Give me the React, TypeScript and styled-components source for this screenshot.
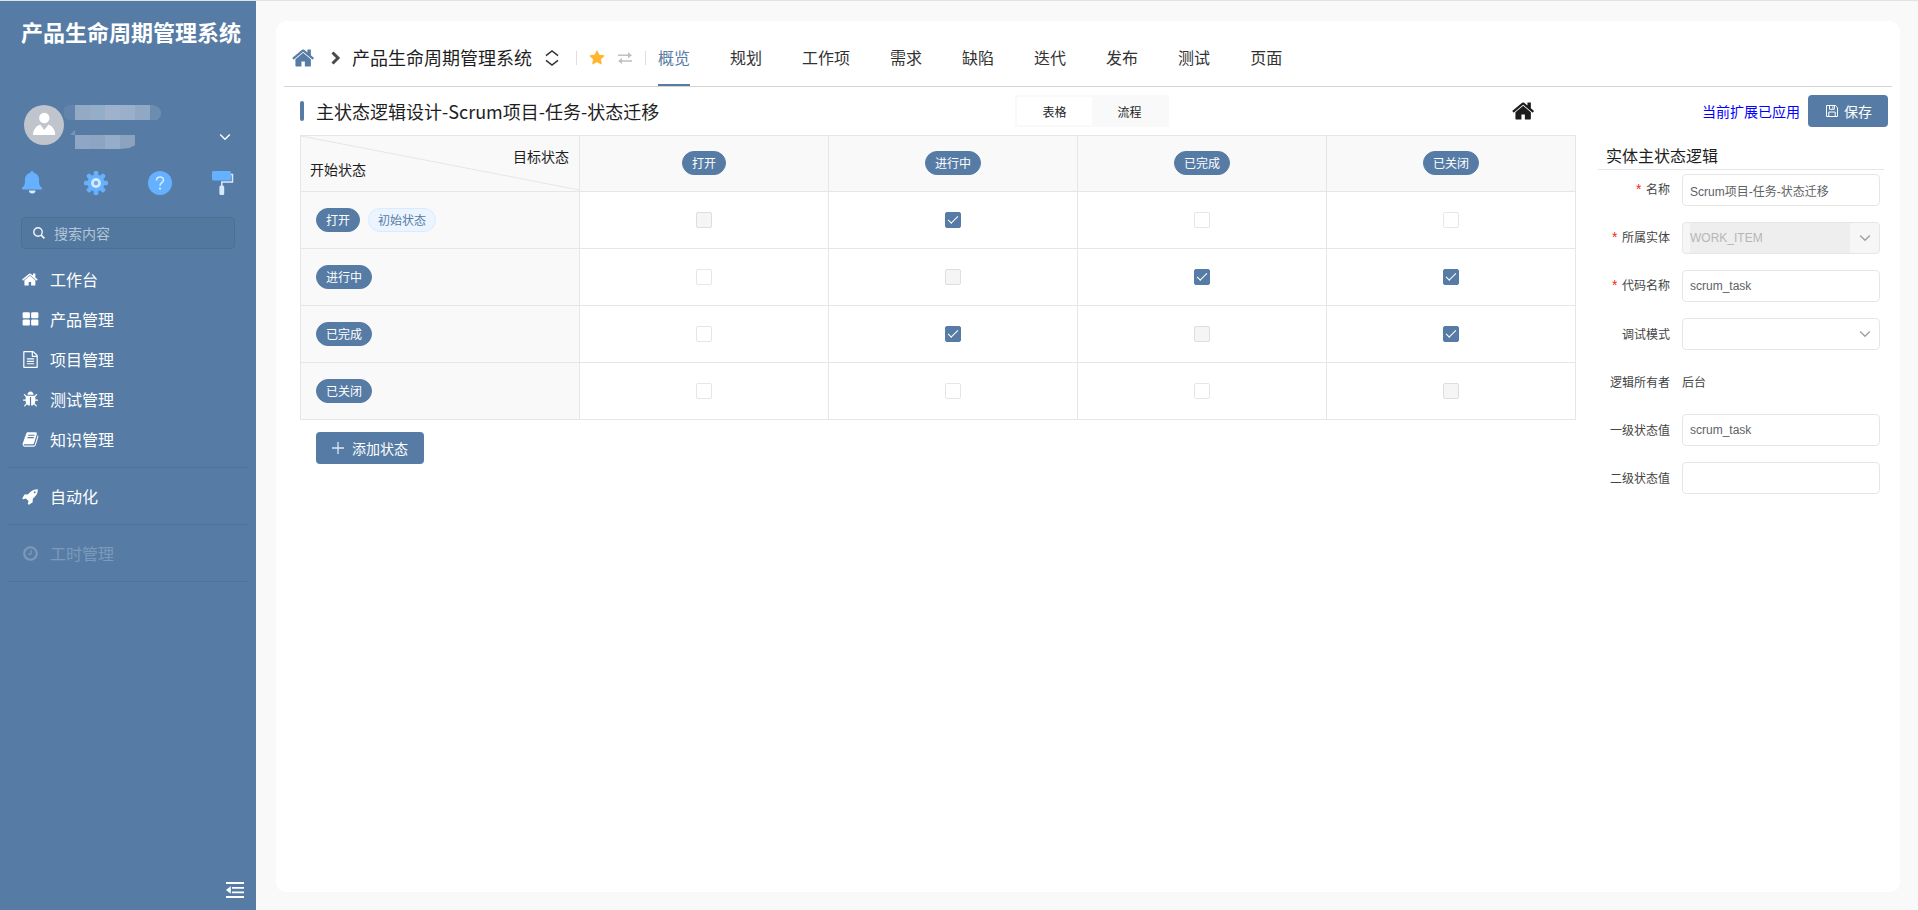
import React, { useState } from "react";
import styled, { createGlobalStyle, css } from "styled-components";

const brand = "#567ca5";
const line = "#e6e6e6";
const soft = "#f9f9f9";

const GlobalStyle = createGlobalStyle`
  *, *::before, *::after { box-sizing: border-box; }
  body {
    margin: 0;
    background: ${soft};
    color: #1e1e1e;
    font: 14px/20px "Noto Sans CJK SC", sans-serif;
  }
  button, input, select { font-family: inherit; margin: 0; }
  svg { display: block; flex: none; }
`;

/* ---------- icons ---------- */

const glyphs = {
  home: "M1408 992v480q0 26-19 45t-45 19h-384v-384h-256v384h-384q-26 0-45-19t-19-45v-480q0-1 .5-3t.5-3l575-474 575 474q1 2 1 6zm223-69l-62 74q-8 9-21 11h-3q-13 0-21-7l-692-577-692 577q-12 8-24 7-13-2-21-11l-62-74q-8-10-7-23.5t11-21.5l719-599q32-26 76-26t76 26l244 204v-195q0-14 9-23t23-9h192q14 0 23 9t9 23v408l219 182q10 8 11 21.5t-7 23.5z",
  grid: "M832 1024v384q0 52-38 90t-90 38h-512q-52 0-90-38t-38-90v-384q0-52 38-90t90-38h512q52 0 90 38t38 90zm0-768v384q0 52-38 90t-90 38h-512q-52 0-90-38t-38-90v-384q0-52 38-90t90-38h512q52 0 90 38t38 90zm896 768v384q0 52-38 90t-90 38h-512q-52 0-90-38t-38-90v-384q0-52 38-90t90-38h512q52 0 90 38t38 90zm0-768v384q0 52-38 90t-90 38h-512q-52 0-90-38t-38-90v-384q0-52 38-90t90-38h512q52 0 90 38t38 90z",
  file: "M1596 380q28 28 48 76t20 88v1152q0 40-28 68t-68 28h-1344q-40 0-68-28t-28-68v-1600q0-40 28-68t68-28h896q40 0 88 20t76 48zm-444-244v376h376q-10-29-22-41l-313-313q-12-12-41-22zm384 1528v-1024h-416q-40 0-68-28t-28-68v-416h-768v1536h1280zm-1024-864q0-14 9-23t23-9h704q14 0 23 9t9 23v64q0 14-9 23t-23 9h-704q-14 0-23-9t-9-23v-64zm736 224q14 0 23 9t9 23v64q0 14-9 23t-23 9h-704q-14 0-23-9t-9-23v-64q0-14 9-23t23-9h704zm0 256q14 0 23 9t9 23v64q0 14-9 23t-23 9h-704q-14 0-23-9t-9-23v-64q0-14 9-23t23-9h704z",
  bug: "M1696 960q0 26-19 45t-45 19h-224q0 171-67 290l208 209q19 19 19 45t-19 45q-18 19-45 19t-45-19l-198-197q-5 5-15 13t-42 28.5-65 36.5-82 29-97 13v-896h-128v896q-51 0-101.5-13.5t-87-33-66-39-43.5-32.5l-15-14-183 207q-20 21-48 21-24 0-43-16-19-18-20.5-44.5t15.5-46.5l202-227q-58-114-58-274h-224q-26 0-45-19t-19-45 19-45 45-19h224v-294l-173-173q-19-19-19-45t19-45 45-19 45 19l173 173h844l173-173q19-19 45-19t45 19 19 45-19 45l-173 173v294h224q26 0 45 19t19 45zm-480-576h-640q0-133 93.5-226.5t226.5-93.5 226.5 93.5 93.5 226.5z",
  book: "M1703 478q40 57 18 129l-275 906q-19 64-76.5 107.5t-122.5 43.5h-923q-77 0-148.5-53.5t-99.5-131.5q-24-67-2-127 0-4 3-27t4-37q1-8-3-21.5t-3-19.5q2-11 8-21t16.5-23.5 16.5-23.5q23-38 45-91.5t30-91.5q3-10 .5-30t-.5-28q3-11 17-28t17-23q21-36 42-92t25-90q1-9-2.5-32t.5-28q4-13 22-30.5t22-22.5q19-26 42.5-84.5t27.5-96.5q1-8-3-25.5t-2-26.5q2-8 9-18t18-23 17-21q8-12 16.5-30.5t15-35 16-36 19.5-32 26.5-23.5 36-11.5 47.5 5.5l-1 3q38-9 51-9h761q74 0 114 56t18 130l-274 906q-36 119-71.5 153.5t-128.5 34.5h-869q-27 0-38 15-11 16-1 43 24 70 144 70h923q29 0 56-15.5t35-41.5l300-987q7-22 5-57 38 15 59 43zm-1064 2q-4 13 2 22.5t20 9.5h608q13 0 25.5-9.5t16.5-22.5l21-64q4-13-2-22.5t-20-9.5h-608q-13 0-25.5 9.5t-16.5 22.5zm-83 256q-4 13 2 22.5t20 9.5h608q13 0 25.5-9.5t16.5-22.5l21-64q4-13-2-22.5t-20-9.5h-608q-13 0-25.5 9.5t-16.5 22.5z",
  rocket: "M1440 448q0-40-28-68t-68-28-68 28-28 68 28 68 68 28 68-28 28-68zm224-288q0 249-75.5 430.5t-253.5 360.5q-81 80-195 176l-20 379q-2 16-16 26l-384 224q-7 4-16 4-12 0-23-9l-64-64q-13-14-8-32l85-276-281-281-276 85q-3 1-9 1-14 0-23-9l-64-64q-17-19-5-39l224-384q10-14 26-16l379-20q96-114 176-195 188-187 358-258t431-71q14 0 24 9.5t10 22.5z",
  clock: "M1024 544v448q0 14-9 23t-23 9h-320q-14 0-23-9t-9-23v-64q0-14 9-23t23-9h224v-352q0-14 9-23t23-9h64q14 0 23 9t9 23zm416 352q0-148-73-273t-198-198-273-73-273 73-198 198-73 273 73 273 198 198 273 73 273-73 198-198 73-273zm224 0q0 209-103 385.5t-279.5 279.5-385.5 103-385.5-103-279.5-279.5-103-385.5 103-385.5 279.5-279.5 385.5-103 385.5 103 279.5 279.5 103 385.5z",
  star: "M1728 647q0 22-26 48l-363 354 86 500q1 7 1 20 0 21-10.5 35.5t-30.5 14.5q-19 0-40-12l-449-236-449 236q-22 12-40 12-21 0-31.5-14.5t-10.5-35.5q0-6 2-20l86-500-364-354q-25-27-25-48 0-37 56-46l502-73 225-455q19-41 49-41t49 41l225 455 502 73q56 9 56 46z",
};

type GlyphName = keyof typeof glyphs;

const Glyph = ({ name, size = 17 }: { name: GlyphName; size?: number }) => (
  <svg width={size} height={size} viewBox="0 0 1792 1792" fill="currentColor" aria-hidden="true">
    <path d={glyphs[name]} />
  </svg>
);

const Chevron = () => (
  <svg width="12" height="8" viewBox="0 0 12 8" fill="none" stroke="currentColor" aria-hidden="true">
    <path d="M1.200 1.500 6 6.200l4.800-4.700" strokeWidth="1.400" />
  </svg>
);

const Bell = () => (
  <svg width="24" height="24" viewBox="0 0 24 24" aria-hidden="true">
    <path d="M9 19.500h6.500a3.200 3 0 0 1-6.500 0z" fill="#d6eaff" />
    <path d="M12 0a1.600 1.600 0 0 1 1.600 1.700c3.400.8 5.400 3.500 5.400 7 0 4.500.6 6.300 2.700 7.900.8.600.5 1.900-.6 1.900H2.900c-1.100 0-1.400-1.300-.6-1.900C4.400 15 5 13.200 5 8.700c0-3.500 2-6.200 5.400-7A1.600 1.600 0 0 1 12 0z" fill="#66b1ff" />
  </svg>
);

const Gear = () => (
  <svg width="24" height="24" viewBox="0 0 24 24" aria-hidden="true">
    <g fill="#66b1ff">
      <circle cx="12" cy="12" r="8.600" />
      {[0, 45, 90, 135].map((a) => (
        <rect key={a} x="9.700" y="0" width="4.600" height="24" rx="1.500" transform={`rotate(${a} 12 12)`} />
      ))}
    </g>
    <circle cx="12" cy="12" r="5" fill="#d6eaff" />
    <circle cx="12" cy="12" r="2.200" fill="#66b1ff" />
  </svg>
);

const Help = () => (
  <svg width="24" height="24" viewBox="0 0 24 24" fill="none" aria-hidden="true">
    <circle cx="12" cy="12" r="12" fill="#66b1ff" />
    <path d="M8.500 9.400c0-4.600 7-4.500 7-.3 0 2.400-3.500 2.700-3.500 5.600" stroke="#d6eaff" strokeWidth="1.600" />
    <circle cx="12" cy="17.700" r="1.100" fill="#d6eaff" />
  </svg>
);

const Roller = () => (
  <svg width="24" height="24" viewBox="0 0 24 24" fill="none" aria-hidden="true">
    <path d="M18 3.500h2.500v7.500H9.800v4.500" stroke="#d6eaff" strokeWidth="1.500" />
    <rect x="7.400" y="14.500" width="4.800" height="9.500" rx="1.500" fill="#d6eaff" />
    <rect x="0" y="0" width="19" height="9.500" rx="1.500" fill="#66b1ff" />
  </svg>
);

const Avatar = () => (
  <svg width="40" height="40" viewBox="0 0 40 40" aria-hidden="true">
    <circle cx="20" cy="20" r="20" fill="#c0c4cc" />
    <circle cx="20.300" cy="13" r="5.200" fill="#fff" />
    <path d="M9 30c0-5 3-9 7.200-10.500L20.300 25l4.200-5.500C28.500 21 31.200 25 31.200 30z" fill="#fff" />
  </svg>
);

const MaskedName = () => (
  <svg width="98" height="44" viewBox="0 0 98 44" role="img" aria-label="用户信息">
    <path d="M11 0H6a7 7 0 0 0 0 15h5z" fill="#6284ab" />
    <path d="M86 0a10 8 0 0 1 11 8 9 8 0 0 1-4 7h-7z" fill="#6c8db2" />
    {["#93a9c4", "#94aec9", "#9fb2cc", "#9aafc9", "#90a8c4"].map((c, i) => (
      <rect key={c} x={11 + i * 15} y="0" width="15" height="15" fill={c} />
    ))}
    <path d="M6 30l5-5v5z" fill="#7795b8" />
    {["#8fa7c4", "#8da5c2", "#94adc8"].map((c, i) => (
      <rect key={c} x={11 + i * 15} y="30" width="15" height="14" fill={c} />
    ))}
    <path d="M56 30h15v10c-2 2-4 1-5 3l-10 1z" fill="#8ba3bf" />
  </svg>
);

const SearchIcon = () => (
  <svg width="12" height="12" viewBox="0 0 12 12" fill="none" stroke="#f2f5f8" aria-hidden="true">
    <circle cx="5" cy="5" r="4.200" strokeWidth="1.400" />
    <path d="M8.200 8.200l3.200 3.200" strokeWidth="1.700" />
  </svg>
);

const CollapseIcon = () => (
  <svg width="18" height="16" viewBox="0 0 18 16" fill="#fff" aria-hidden="true">
    <path d="M0 0h18v2H0zM6 5h12v1.700H6zM6 9.500h12v1.700H6zM0 14h18v2H0zM0 8l4.800-3.800v7.600z" />
  </svg>
);

const RightMark = () => (
  <svg width="10" height="14" viewBox="0 0 10 14" fill="none" stroke="#4a4a4a" strokeWidth="3" aria-hidden="true">
    <path d="M1.500 1.500L7 7l-5.500 5.500" />
  </svg>
);

const SwitchMark = () => (
  <svg width="14" height="16" viewBox="0 0 14 16" fill="none" stroke="#333" strokeWidth="1.500" aria-hidden="true">
    <path d="M1 5.700L7 1l6 4.700M1 10.300L7 15l6-4.700" />
  </svg>
);

const SwapIcon = () => (
  <svg width="14" height="12" viewBox="0 0 14 12" fill="#c0c0c0" aria-hidden="true">
    <path d="M0 2.500h10V.3L14 3.300l-4 3V4H0zM14 9.700H4v2.200L0 8.900l4-2.900v2.200h10z" />
  </svg>
);

const SaveIcon = () => (
  <svg width="12" height="12" viewBox="0 0 12 12" fill="none" stroke="#fff" aria-hidden="true">
    <path d="M.5.5h8.800l2.200 2.200v8.800H.5zM3.500.5v3.800h4.800V.5M2.800 11.500V7h6.400v4.500M6.800 1.500v2" />
  </svg>
);

const PlusIcon = () => (
  <svg width="12" height="12" viewBox="0 0 12 12" stroke="#dfe7ef" aria-hidden="true">
    <path d="M6 0v12M0 6h12" strokeWidth="1.300" />
  </svg>
);

/* ---------- shell ---------- */

const Shell = styled.div`
  display: flex;
  min-height: 100vh;
  border-top: 1px solid #e2e2e2;
`;

const Sidebar = styled.aside`
  flex: none;
  display: flex;
  flex-direction: column;
  width: 256px;
  background: ${brand};
  color: #fff;
`;

const Brand = styled.h1`
  margin: 0;
  padding: 14px 0 0 21px;
  font-size: 22px;
  line-height: 32px;
  font-weight: 700;
  white-space: nowrap;
`;

const UserRow = styled.div`
  display: flex;
  margin-top: 58px;
  padding: 0 25px 0 24px;
`;

const UserToggle = styled.button`
  margin: 26px 0 0 auto;
  padding: 0;
  height: 12px;
  border: 0;
  background: none;
  color: #fff;
`;

const Shortcuts = styled.div`
  display: flex;
  justify-content: space-between;
  padding: 0 20px;
  margin-top: 22px;
`;

const IconButton = styled.button`
  padding: 0;
  border: 0;
  background: none;
  color: inherit;
  cursor: pointer;
`;

const SearchBox = styled.label`
  display: flex;
  align-items: center;
  gap: 9px;
  height: 32px;
  margin: 22px 21px 10px;
  padding: 0 11px;
  border: 1px solid #4b7096;
  border-radius: 4px;
  background: #52789f;
`;

const SearchInput = styled.input`
  width: 100%;
  padding: 0;
  border: 0;
  outline: 0;
  background: none;
  color: #fff;
  font-size: 14px;
  line-height: 20px;
  &::placeholder { color: #b4c5d7; }
`;

const Menu = styled.nav`
  padding: 0 8px;
`;

const MenuGroup = styled.div`
  padding-bottom: 8px;
  margin-bottom: 8px;
  border-bottom: 1px solid #4e739b;
`;

const MenuLink = styled.a<{ $muted?: boolean }>`
  display: flex;
  align-items: center;
  gap: 11px;
  height: 40px;
  padding: 0 14px;
  font-size: 16px;
  color: ${(p) => (p.$muted ? "#7d9aba" : "#fff")};
  text-decoration: none;
`;

const SidebarFoot = styled.div`
  display: flex;
  justify-content: flex-end;
  margin-top: auto;
  padding: 12px;
`;

const Main = styled.main`
  flex: 1;
  min-width: 0;
  display: flex;
  padding: 20px 18px 18px 20px;
`;

const Card = styled.section`
  flex: 1;
  min-width: 0;
  padding: 0 8px;
  border-radius: 10px;
  background: #fff;
`;

/* ---------- header ---------- */

const Header = styled.header`
  display: flex;
  align-items: center;
  height: 66px;
  padding: 8px 8px 0;
  border-bottom: 1px solid #d3d3d3;
`;

const HomeLink = styled.a`
  margin-right: 15px;
  color: ${brand};
`;

const ProjectName = styled.span`
  margin: 0 13px 0 11px;
  padding-bottom: 2px;
  font-size: 18px;
  line-height: 28px;
  white-space: nowrap;
`;

const Separator = styled.span`
  width: 1px;
  height: 14px;
  margin: 0 12px 0 13px;
  background: #dedede;
`;

const SeparatorWide = styled(Separator)`
  margin-left: 17px;
`;

const StarButton = styled(IconButton)`
  margin-right: 13px;
  color: #ffb62e;
`;

const Tabs = styled.nav`
  display: flex;
  align-self: stretch;
  gap: 40px;
`;

const Tab = styled.a<{ $active?: boolean }>`
  display: flex;
  align-items: center;
  border-bottom: 2px solid ${(p) => (p.$active ? brand : "transparent")};
  color: ${(p) => (p.$active ? brand : "#333")};
  font-size: 16px;
  text-decoration: none;
  white-space: nowrap;
`;

/* ---------- toolbar ---------- */

const Toolbar = styled.div`
  display: grid;
  grid-template-columns: 1fr auto 1fr;
  align-items: center;
  padding: 8px 4px 8px 12px;
`;

const PageTitle = styled.h2`
  display: flex;
  align-items: center;
  gap: 12px;
  margin: 0 0 0 4px;
  font-size: 18px;
  line-height: 28px;
  font-weight: 400;
  white-space: nowrap;
  &::before {
    content: "";
    width: 4px;
    height: 20px;
    border-radius: 2px;
    background: ${brand};
  }
`;

const Segmented = styled.div`
  display: flex;
  padding: 2px;
  border-radius: 2px;
  background: ${soft};
`;

const Segment = styled.button<{ $active?: boolean }>`
  width: 75px;
  height: 28px;
  padding: 0;
  border: 0;
  border-radius: 2px;
  background: ${(p) => (p.$active ? "#fff" : "transparent")};
  color: #1e1e1e;
  font-size: 12px;
`;

const Actions = styled.div`
  display: flex;
  align-items: center;
  justify-content: flex-end;
`;

const CenterHome = styled.a`
  margin-right: 166px;
  color: #1c1c1c;
`;

const ExtensionLink = styled.a`
  margin-right: 8px;
  color: #00f;
  font-size: 14px;
  text-decoration: none;
  white-space: nowrap;
`;

const PrimaryButton = styled.button`
  display: flex;
  align-items: center;
  gap: 6px;
  height: 32px;
  padding: 0 16px 1px 18px;
  border: 0;
  border-radius: 4px;
  background: ${brand};
  color: #fff;
  font-size: 14px;
  line-height: 20px;
`;

const AddButton = styled(PrimaryButton)`
  gap: 8px;
  margin: 12px 16px;
  padding: 0 16px 1px;
`;

/* ---------- matrix ---------- */

const Body = styled.div`
  display: flex;
  align-items: flex-start;
  gap: 22px;
  padding: 0 8px 16px 16px;
`;

const MatrixArea = styled.div`
  flex: 1;
  min-width: 0;
`;

const Matrix = styled.table`
  width: 100%;
  table-layout: fixed;
  border-collapse: collapse;
`;

const cell = css`
  height: 57px;
  padding: 0;
  border: 1px solid ${line};
  font-weight: 400;
`;

const HeadCell = styled.th`
  ${cell}
  height: 56px;
  padding-bottom: 2px;
  background: ${soft};
`;

const CornerCell = styled(HeadCell)`
  position: relative;
  width: 279px;
`;

const Diagonal = styled.svg`
  position: absolute;
  inset: 0;
  width: 100%;
  height: 100%;
`;

const CornerLabels = styled.div`
  display: flex;
  justify-content: space-between;
  height: 33px;
  padding: 0 10px 0 9px;
`;

const StartLabel = styled.span`
  align-self: flex-end;
`;

const RowHead = styled.th`
  ${cell}
  background: ${soft};
`;

const RowHeadInner = styled.div`
  display: flex;
  gap: 8px;
  padding-left: 15px;
`;

const Cell = styled.td`
  ${cell}
`;

const Badge = styled.span<{ $light?: boolean }>`
  display: inline-block;
  padding: 0 9px;
  border: 1px solid ${(p) => (p.$light ? "#d9ebff" : brand)};
  border-radius: 12px;
  background: ${(p) => (p.$light ? "#ecf5ff" : brand)};
  color: ${(p) => (p.$light ? brand : "#fff")};
  font-size: 12px;
  line-height: 22px;
  vertical-align: middle;
`;

const Check = styled.input`
  appearance: none;
  display: grid;
  justify-content: center;
  width: 16px;
  height: 16px;
  margin: 0 auto;
  border: 1px solid ${line};
  border-radius: 2px;
  background: #fff;
  &:disabled { background: #f5f5f5; border-color: #dedede; }
  &:checked { background: ${brand}; border-color: ${brand}; }
  &:checked::after {
    content: "";
    width: 10px;
    height: 5px;
    margin-top: 3px;
    border: solid #fff;
    border-width: 0 0 1px 1px;
    transform: rotate(-45deg);
  }
`;

/* ---------- side form ---------- */

const Panel = styled.aside`
  flex: none;
  width: 286px;
`;

const PanelTitle = styled.h3`
  margin: 0;
  padding: 8px 8px 2px;
  border-bottom: 1px solid ${line};
  font-size: 16px;
  line-height: 24px;
  font-weight: 400;
`;

const Form = styled.form`
  display: flex;
  flex-direction: column;
  gap: 16px;
  padding: 4px 4px 0 0;
`;

const Field = styled.div`
  display: grid;
  grid-template-columns: 72px 1fr;
  column-gap: 12px;
  align-items: center;
  height: 32px;
  font-size: 12px;
  color: #444;
`;

const FieldLabel = styled.label<{ $required?: boolean }>`
  display: flex;
  justify-content: flex-end;
  white-space: nowrap;
  ${(p) =>
    p.$required &&
    css`
      &::before {
        content: "*";
        margin-right: 3px;
        padding-top: 2px;
        font-family: "Liberation Mono", monospace;
        font-size: 14px;
        color: #f5260f;
      }
    `}
`;

const TextBox = styled.input`
  width: 100%;
  height: 32px;
  padding: 0 7px;
  border: 1px solid ${line};
  border-radius: 4px;
  background: #fff;
  color: #606266;
  font: 12px "Liberation Sans", "Noto Sans CJK SC", sans-serif;
`;

const SelectBox = styled.div<{ $disabled?: boolean }>`
  display: flex;
  align-items: center;
  height: 32px;
  padding: 0 8px 0 7px;
  border: 1px solid ${line};
  border-radius: 4px;
  background: ${(p) => (p.$disabled ? "#f6f6f6" : "#fff")};
  color: #a0a0a0;
`;

const SelectInput = styled.select`
  appearance: none;
  flex: 1;
  align-self: stretch;
  margin-right: 9px;
  padding: 0;
  border: 0;
  outline: 0;
  background: transparent;
  color: #606266;
  font: 12px "Liberation Sans", "Noto Sans CJK SC", sans-serif;
  &:disabled { background: #eee; color: #b6b6b6; opacity: 1; }
`;

const menu: { icon: GlyphName; label: string; muted?: boolean }[][] = [
  [
    { icon: "home", label: "工作台" },
    { icon: "grid", label: "产品管理" },
    { icon: "file", label: "项目管理" },
    { icon: "bug", label: "测试管理" },
    { icon: "book", label: "知识管理" },
  ],
  [{ icon: "rocket", label: "自动化" }],
  [{ icon: "clock", label: "工时管理", muted: true }],
];

const tabs = ["概览", "规划", "工作项", "需求", "缺陷", "迭代", "发布", "测试", "页面"];
const states = ["打开", "进行中", "已完成", "已关闭"];
const initialMoves = ["0-1", "1-2", "1-3", "2-1", "2-3"];

export default function App() {
  const [moves, setMoves] = useState<string[]>(initialMoves);
  const [view, setView] = useState("表格");
  const toggle = (key: string) =>
    setMoves((m) => (m.includes(key) ? m.filter((k) => k !== key) : [...m, key]));

  return (
    <Shell>
      <GlobalStyle />
      <Sidebar>
        <Brand>产品生命周期管理系统</Brand>
        <UserRow>
          <Avatar />
          <MaskedName />
          <UserToggle aria-label="展开用户菜单"><Chevron /></UserToggle>
        </UserRow>
        <Shortcuts>
          <IconButton aria-label="通知"><Bell /></IconButton>
          <IconButton aria-label="设置"><Gear /></IconButton>
          <IconButton aria-label="帮助"><Help /></IconButton>
          <IconButton aria-label="主题"><Roller /></IconButton>
        </Shortcuts>
        <SearchBox>
          <SearchIcon />
          <SearchInput placeholder="搜索内容" aria-label="搜索内容" />
        </SearchBox>
        <Menu>
          {menu.map((group, i) => (
            <MenuGroup key={i}>
              {group.map((m) => (
                <MenuLink key={m.label} href="#" $muted={m.muted}>
                  <Glyph name={m.icon} />
                  {m.label}
                </MenuLink>
              ))}
            </MenuGroup>
          ))}
        </Menu>
        <SidebarFoot>
          <IconButton aria-label="收起菜单"><CollapseIcon /></IconButton>
        </SidebarFoot>
      </Sidebar>

      <Main>
        <Card>
          <Header>
            <HomeLink href="#" aria-label="首页"><Glyph name="home" size={24} /></HomeLink>
            <RightMark />
            <ProjectName>产品生命周期管理系统</ProjectName>
            <IconButton aria-label="切换项目"><SwitchMark /></IconButton>
            <SeparatorWide />
            <StarButton aria-label="收藏"><Glyph name="star" size={16} /></StarButton>
            <IconButton aria-label="切换"><SwapIcon /></IconButton>
            <Separator />
            <Tabs>
              {tabs.map((t, i) => (
                <Tab key={t} href="#" $active={i === 0}>{t}</Tab>
              ))}
            </Tabs>
          </Header>

          <Toolbar>
            <PageTitle>主状态逻辑设计-Scrum项目-任务-状态迁移</PageTitle>
            <Segmented>
              {["表格", "流程"].map((v) => (
                <Segment key={v} $active={view === v} onClick={() => setView(v)}>{v}</Segment>
              ))}
            </Segmented>
            <Actions>
              <CenterHome href="#" aria-label="主页"><Glyph name="home" size={24} /></CenterHome>
              <ExtensionLink href="#">当前扩展已应用</ExtensionLink>
              <PrimaryButton><SaveIcon />保存</PrimaryButton>
            </Actions>
          </Toolbar>

          <Body>
            <MatrixArea>
              <Matrix>
                <thead>
                  <tr>
                    <CornerCell>
                      <Diagonal viewBox="0 0 100 100" preserveAspectRatio="none" aria-hidden="true">
                        <path d="M0 0L100 98" stroke={line} vectorEffect="non-scaling-stroke" />
                      </Diagonal>
                      <CornerLabels>
                        <StartLabel>开始状态</StartLabel>
                        <span>目标状态</span>
                      </CornerLabels>
                    </CornerCell>
                    {states.map((s) => (
                      <HeadCell key={s} scope="col"><Badge>{s}</Badge></HeadCell>
                    ))}
                  </tr>
                </thead>
                <tbody>
                  {states.map((from, r) => (
                    <tr key={from}>
                      <RowHead scope="row">
                        <RowHeadInner>
                          <Badge>{from}</Badge>
                          {r === 0 && <Badge $light>初始状态</Badge>}
                        </RowHeadInner>
                      </RowHead>
                      {states.map((to, c) => (
                        <Cell key={to}>
                          <Check
                            type="checkbox"
                            aria-label={`${from} → ${to}`}
                            disabled={r === c}
                            checked={moves.includes(`${r}-${c}`)}
                            onChange={() => toggle(`${r}-${c}`)}
                          />
                        </Cell>
                      ))}
                    </tr>
                  ))}
                </tbody>
              </Matrix>
              <AddButton><PlusIcon />添加状态</AddButton>
            </MatrixArea>

            <Panel>
              <PanelTitle>实体主状态逻辑</PanelTitle>
              <Form>
                <Field>
                  <FieldLabel $required htmlFor="name">名称</FieldLabel>
                  <TextBox id="name" defaultValue="Scrum项目-任务-状态迁移" />
                </Field>
                <Field>
                  <FieldLabel $required htmlFor="entity">所属实体</FieldLabel>
                  <SelectBox $disabled>
                    <SelectInput id="entity" disabled><option>WORK_ITEM</option></SelectInput>
                    <Chevron />
                  </SelectBox>
                </Field>
                <Field>
                  <FieldLabel $required htmlFor="code">代码名称</FieldLabel>
                  <TextBox id="code" defaultValue="scrum_task" />
                </Field>
                <Field>
                  <FieldLabel htmlFor="debug">调试模式</FieldLabel>
                  <SelectBox>
                    <SelectInput id="debug"><option value="" /></SelectInput>
                    <Chevron />
                  </SelectBox>
                </Field>
                <Field>
                  <FieldLabel htmlFor="owner">逻辑所有者</FieldLabel>
                  <output id="owner">后台</output>
                </Field>
                <Field>
                  <FieldLabel htmlFor="state1">一级状态值</FieldLabel>
                  <TextBox id="state1" defaultValue="scrum_task" />
                </Field>
                <Field>
                  <FieldLabel htmlFor="state2">二级状态值</FieldLabel>
                  <TextBox id="state2" />
                </Field>
              </Form>
            </Panel>
          </Body>
        </Card>
      </Main>
    </Shell>
  );
}
